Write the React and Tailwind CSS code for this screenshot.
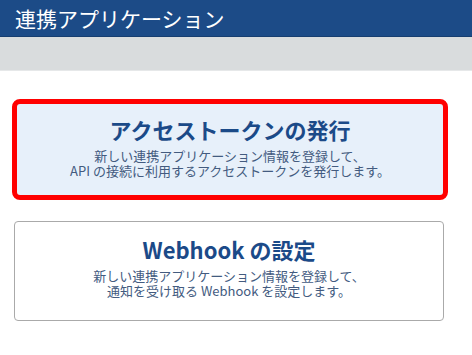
export default function App() {
  const font = { fontFamily: '"Noto Sans CJK JP", "Noto Sans", sans-serif' };
  return (
    <div className="w-[472px] h-[355px] bg-white overflow-hidden" style={font}>
      <div className="h-[37px] bg-[#1c4b87] flex items-center pl-[15px] border-b border-[#163e70]">
        <span className="text-white text-[21px] leading-none">連携アプリケーション</span>
      </div>
      <div className="h-[34px] bg-[#d9dcdd] border-b border-[#e6e8e9]"></div>
      <div className="pl-[12px] pt-[28px] flex flex-col">
        <div className="w-[436px] h-[101px] border-[5px] border-[#ff0000] rounded-[8px] bg-[#e7f0fa] flex flex-col items-center pt-[13px]">
          <div className="text-[22px] font-bold text-[#1b4a88] leading-[24px]">アクセストークンの発行</div>
          <div className="text-[13px] text-[#435b7f] leading-[15px] text-center mt-[7px]">
            <div>新しい連携アプリケーション情報を登録して、</div>
            <div>API の接続に利用するアクセストークンを発行します。</div>
          </div>
        </div>
        <div className="ml-[2px] mt-[21px] w-[430px] h-[100px] border border-[#aaaaaa] rounded-[4px] bg-white flex flex-col items-center pt-[15px]">
          <div className="text-[22px] font-bold text-[#1b4a88] leading-[24px]">Webhook の設定</div>
          <div className="text-[13px] text-[#435b7f] leading-[15px] text-center mt-[7px]">
            <div>新しい連携アプリケーション情報を登録して、</div>
            <div>通知を受け取る Webhook を設定します。</div>
          </div>
        </div>
      </div>
    </div>
  );
}
